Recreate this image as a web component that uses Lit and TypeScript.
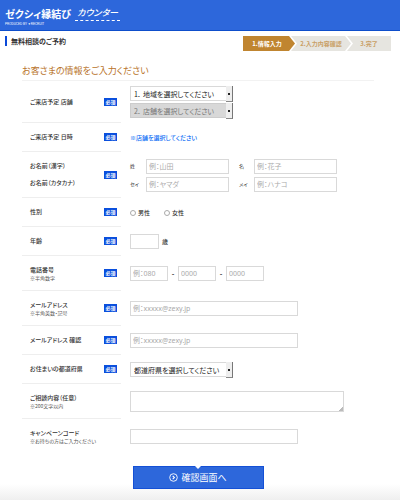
import { LitElement, html, css, nothing, TemplateResult } from "lit";
import { customElement } from "lit/decorators.js";

@customElement("app-root")
export class AppRoot extends LitElement {
  static styles = css`
    :host {
      display: block;
      min-height: 100vh;
      box-sizing: border-box;
      font-family: "Noto Sans CJK JP", "Noto Sans", sans-serif;
      font-feature-settings: "palt";
      font-size: 6px;
      line-height: 8px;
      color: #333;
      background: linear-gradient(to top, #efefef, #fff 16px);
    }
    * {
      box-sizing: border-box;
    }
    .header {
      display: flex;
      align-items: flex-start;
      gap: 4px;
      height: 31px;
      padding: 5px 5px 0;
      background: #2d67db;
      border-bottom: 1px solid #0e4ecb;
      color: #fff;
    }
    .brand {
      display: flex;
      flex-direction: column;
      color: #fff;
      text-decoration: none;
      white-space: nowrap;
    }
    .brand-name {
      font-size: 10px;
      line-height: 17px;
      font-weight: 700;
    }
    .brand-by {
      font-family: "Liberation Sans", sans-serif;
      font-size: 3px;
      line-height: 4px;
    }
    .service {
      padding: 0 2px;
      font-size: 9px;
      line-height: 15px;
      font-weight: 500;
      font-style: italic;
      border-bottom: 1px dashed #fff;
    }
    .bar {
      display: flex;
      justify-content: space-between;
      align-items: flex-start;
      padding: 5px 9px 0 5px;
    }
    .title {
      margin: 0;
      padding-left: 4px;
      border-left: 2px solid #0a49d8;
      font-size: 7px;
      line-height: 10px;
      font-weight: 700;
    }
    .steps {
      display: flex;
      margin: 0;
      padding: 0;
      list-style: none;
      font-weight: 700;
      line-height: 15px;
      color: #c99f66;
      white-space: nowrap;
    }
    .step {
      width: 60px;
      margin-left: -4px;
      text-align: center;
      background: #e6e5e0;
      clip-path: polygon(0 0, calc(100% - 6px) 0, 100% 50%, calc(100% - 6px) 100%, 0 100%, 6px 50%);
    }
    .step.current {
      width: 52px;
      margin-left: 0;
      padding-right: 4px;
      background: #c08530;
      color: #fff;
      clip-path: polygon(0 0, calc(100% - 6px) 0, 100% 50%, calc(100% - 6px) 100%, 0 100%);
    }
    .step.last {
      width: 44px;
      clip-path: polygon(0 0, 100% 0, 100% 100%, 0 100%, 6px 50%);
    }
    .form {
      padding: 13px 26px 8px 22px;
    }
    .heading {
      margin: 0;
      padding-bottom: 2px;
      border-bottom: 1px solid #f2f2f2;
      font-size: 9px;
      line-height: 14px;
      font-weight: 400;
      color: #b8732a;
    }
    .row {
      display: grid;
      grid-template-columns: 99px 1fr;
      gap: 9px;
      min-height: 29px;
    }
    .row.tall {
      min-height: 35px;
    }
    .row.double {
      min-height: 42px;
    }
    .row.names-row {
      min-height: 46px;
    }
    .caption {
      display: flex;
      align-items: center;
      justify-content: space-between;
      padding: 0 4px 0 8px;
      border-bottom: 1px solid #eee;
      font-weight: 500;
    }
    .row:last-of-type .caption {
      border-bottom: 0;
    }
    .names {
      display: flex;
      flex-direction: column;
      white-space: nowrap;
    }
    .names.spaced {
      gap: 9px;
    }
    .note {
      font-size: 5px;
      line-height: 7px;
      font-weight: 400;
      color: #555;
    }
    .required {
      width: 13px;
      text-align: center;
      font-size: 5px;
      line-height: 8px;
      font-weight: 700;
      color: #fff;
      background: #0a4fdd;
    }
    .field {
      display: flex;
      align-items: center;
    }
    .stack {
      display: flex;
      flex-direction: column;
      gap: 2px;
    }
    .pairs {
      display: grid;
      grid-template-columns: 16px 83px 25px 83px;
      row-gap: 3px;
      align-items: center;
      font-size: 5px;
    }
    .pairs .second {
      margin-left: 10px;
    }
    input,
    textarea,
    select {
      display: block;
      margin: 0;
      max-width: 100%;
      font: inherit;
      font-size: 7px;
      font-feature-settings: inherit;
      color: #222;
      background: #fff;
      border: 1px solid #d9d9d9;
      border-radius: 0;
      outline: 0;
    }
    input {
      font-family: "Noto Sans", "Noto Sans CJK JP", sans-serif;
    }
    .text {
      height: 15px;
      padding: 0 2px;
      width: 100%;
    }
    .text.long {
      width: 168px;
    }
    .text.phone {
      width: 38px;
    }
    .text.age {
      width: 29px;
    }
    ::placeholder {
      color: #aaa;
      opacity: 1;
    }
    .area {
      width: 214px;
      height: 21px;
      padding: 2px;
      resize: none;
    }
    .area-box {
      position: relative;
    }
    .area-box::after {
      content: "";
      position: absolute;
      right: 1px;
      bottom: 1px;
      width: 5px;
      height: 5px;
      background: linear-gradient(135deg, transparent 50%, #bbb 50%);
    }
    .drop {
      position: relative;
      width: 103px;
    }
    .drop select {
      appearance: none;
      width: 100%;
      height: 15px;
      padding: 0 8px 0 3px;
    }
    .drop select:disabled {
      background: #d8d8d8;
      border-color: #ccc;
      color: #777;
      opacity: 1;
    }
    .drop::after {
      content: "";
      position: absolute;
      top: 0;
      right: 0;
      width: 6px;
      height: 15px;
      border-right: 1px solid #777;
      border-bottom: 1px solid #888;
      background: linear-gradient(#222, #222) 2px 7px / 2px 2px no-repeat #eee;
    }
    .hint {
      color: #0a6cf5;
      font-weight: 500;
    }
    .choices {
      gap: 14px;
    }
    .choice {
      display: flex;
      align-items: center;
      gap: 2px;
      font-weight: 500;
    }
    .choice input {
      appearance: none;
      width: 6px;
      height: 6px;
      border-color: #aaa;
      border-radius: 50%;
    }
    .choice input:checked {
      background: #0a4fdd;
    }
    .unit {
      margin-left: 3px;
      font-weight: 500;
    }
    .dash {
      width: 10px;
      text-align: center;
      font-size: 7px;
      font-weight: 700;
    }
    .submit {
      display: flex;
      align-items: center;
      justify-content: center;
      gap: 3px;
      width: 131px;
      height: 23px;
      margin: 12px auto 0;
      padding: 0;
      border: 1px solid #1450d6;
      color: #fff;
      background: #2d67db;
      font: inherit;
      font-size: 9px;
      line-height: 12px;
      position: relative;
    }
    .submit::before {
      content: "";
      position: absolute;
      top: -1px;
      left: calc(50% - 3px);
      width: 6px;
      height: 3px;
      background: #fff;
      clip-path: polygon(0 0, 100% 0, 50% 100%);
    }
  `;

  private row(
    names: TemplateResult,
    field: TemplateResult,
    size = "",
    required = true,
    spaced = false
  ) {
    return html`<div class="row ${size}">
      <div class="caption">
        <div class="names ${spaced ? "spaced" : ""}">${names}</div>
        ${required ? html`<span class="required">必須</span>` : nothing}
      </div>
      <div class="field">${field}</div>
    </div>`;
  }

  render() {
    return html`
      <header class="header">
        <a class="brand" href="#">
          <span class="brand-name">ゼクシィ縁結び</span>
          <span class="brand-by">PRODUCED BY ▼RECRUIT</span>
        </a>
        <span class="service">カウンター</span>
      </header>
      <div class="bar">
        <h1 class="title">無料相談のご予約</h1>
        <ol class="steps">
          <li class="step current" aria-current="step">1.情報入力</li>
          <li class="step">2.入力内容確認</li>
          <li class="step last">3.完了</li>
        </ol>
      </div>
      <form class="form">
        <h2 class="heading">お客さまの情報をご入力ください</h2>
        ${this.row(
          html`<label for="area">ご来店予定 店舗</label>`,
          html`<div class="stack">
            <div class="drop">
              <select id="area"><option>1． 地域を選択してください</option></select>
            </div>
            <div class="drop">
              <select aria-label="店舗" disabled><option>2． 店舗を選択してください</option></select>
            </div>
          </div>`,
          "double"
        )}
        ${this.row(
          html`<span>ご来店予定 日時</span>`,
          html`<span class="hint">※店舗を選択してください</span>`
        )}
        ${this.row(
          html`<span>お名前（漢字）</span><span>お名前（カタカナ）</span>`,
          html`<div class="pairs">
            <label for="sei">姓</label>
            <input class="text" id="sei" placeholder="例：山田" />
            <label class="second" for="mei">名</label>
            <input class="text" id="mei" placeholder="例：花子" />
            <label for="sei-kana">セイ</label>
            <input class="text" id="sei-kana" placeholder="例：ヤマダ" />
            <label class="second" for="mei-kana">メイ</label>
            <input class="text" id="mei-kana" placeholder="例：ハナコ" />
          </div>`,
          "names-row",
          true,
          true
        )}
        ${this.row(
          html`<span id="gender">性別</span>`,
          html`<div class="field choices" role="radiogroup" aria-labelledby="gender">
            <label class="choice"><input type="radio" name="gender" />男性</label>
            <label class="choice"><input type="radio" name="gender" />女性</label>
          </div>`
        )}
        ${this.row(
          html`<label for="age">年齢</label>`,
          html`<input class="text age" id="age" /><span class="unit">歳</span>`
        )}
        ${this.row(
          html`<label for="tel">電話番号</label><span class="note">※半角数字</span>`,
          html`<input class="text phone" id="tel" type="tel" placeholder="例：080" />
            <span class="dash">-</span>
            <input class="text phone" type="tel" aria-label="電話番号 2" placeholder="0000" />
            <span class="dash">-</span>
            <input class="text phone" type="tel" aria-label="電話番号 3" placeholder="0000" />`,
          "tall"
        )}
        ${this.row(
          html`<label for="mail">メールアドレス</label><span class="note">※半角英数・記号</span>`,
          html`<input class="text long" id="mail" type="email" placeholder="例：xxxxx@zexy.jp" />`,
          "tall"
        )}
        ${this.row(
          html`<label for="mail2">メールアドレス 確認</label>`,
          html`<input class="text long" id="mail2" type="email" placeholder="例：xxxxx@zexy.jp" />`
        )}
        ${this.row(
          html`<label for="pref">お住まいの都道府県</label>`,
          html`<div class="drop">
            <select id="pref"><option>都道府県を選択してください</option></select>
          </div>`
        )}
        ${this.row(
          html`<label for="memo">ご相談内容（任意）</label><span class="note">※200文字以内</span>`,
          html`<div class="area-box"><textarea class="area" id="memo"></textarea></div>`,
          "tall",
          false
        )}
        ${this.row(
          html`<label for="code">キャンペーンコード</label><span class="note">※お持ちの方はご入力ください</span>`,
          html`<input class="text long" id="code" />`,
          "tall",
          false
        )}
        <button class="submit" type="button">
          <svg width="9" height="9" viewBox="0 0 9 9" fill="none" stroke="#fff" aria-hidden="true">
            <circle cx="4.5" cy="4.5" r="3.8" stroke-width="0.9" />
            <path d="M3.7 2.8 5.4 4.5 3.7 6.2" stroke-width="1.1" />
          </svg>
          確認画面へ
        </button>
      </form>
    `;
  }
}
